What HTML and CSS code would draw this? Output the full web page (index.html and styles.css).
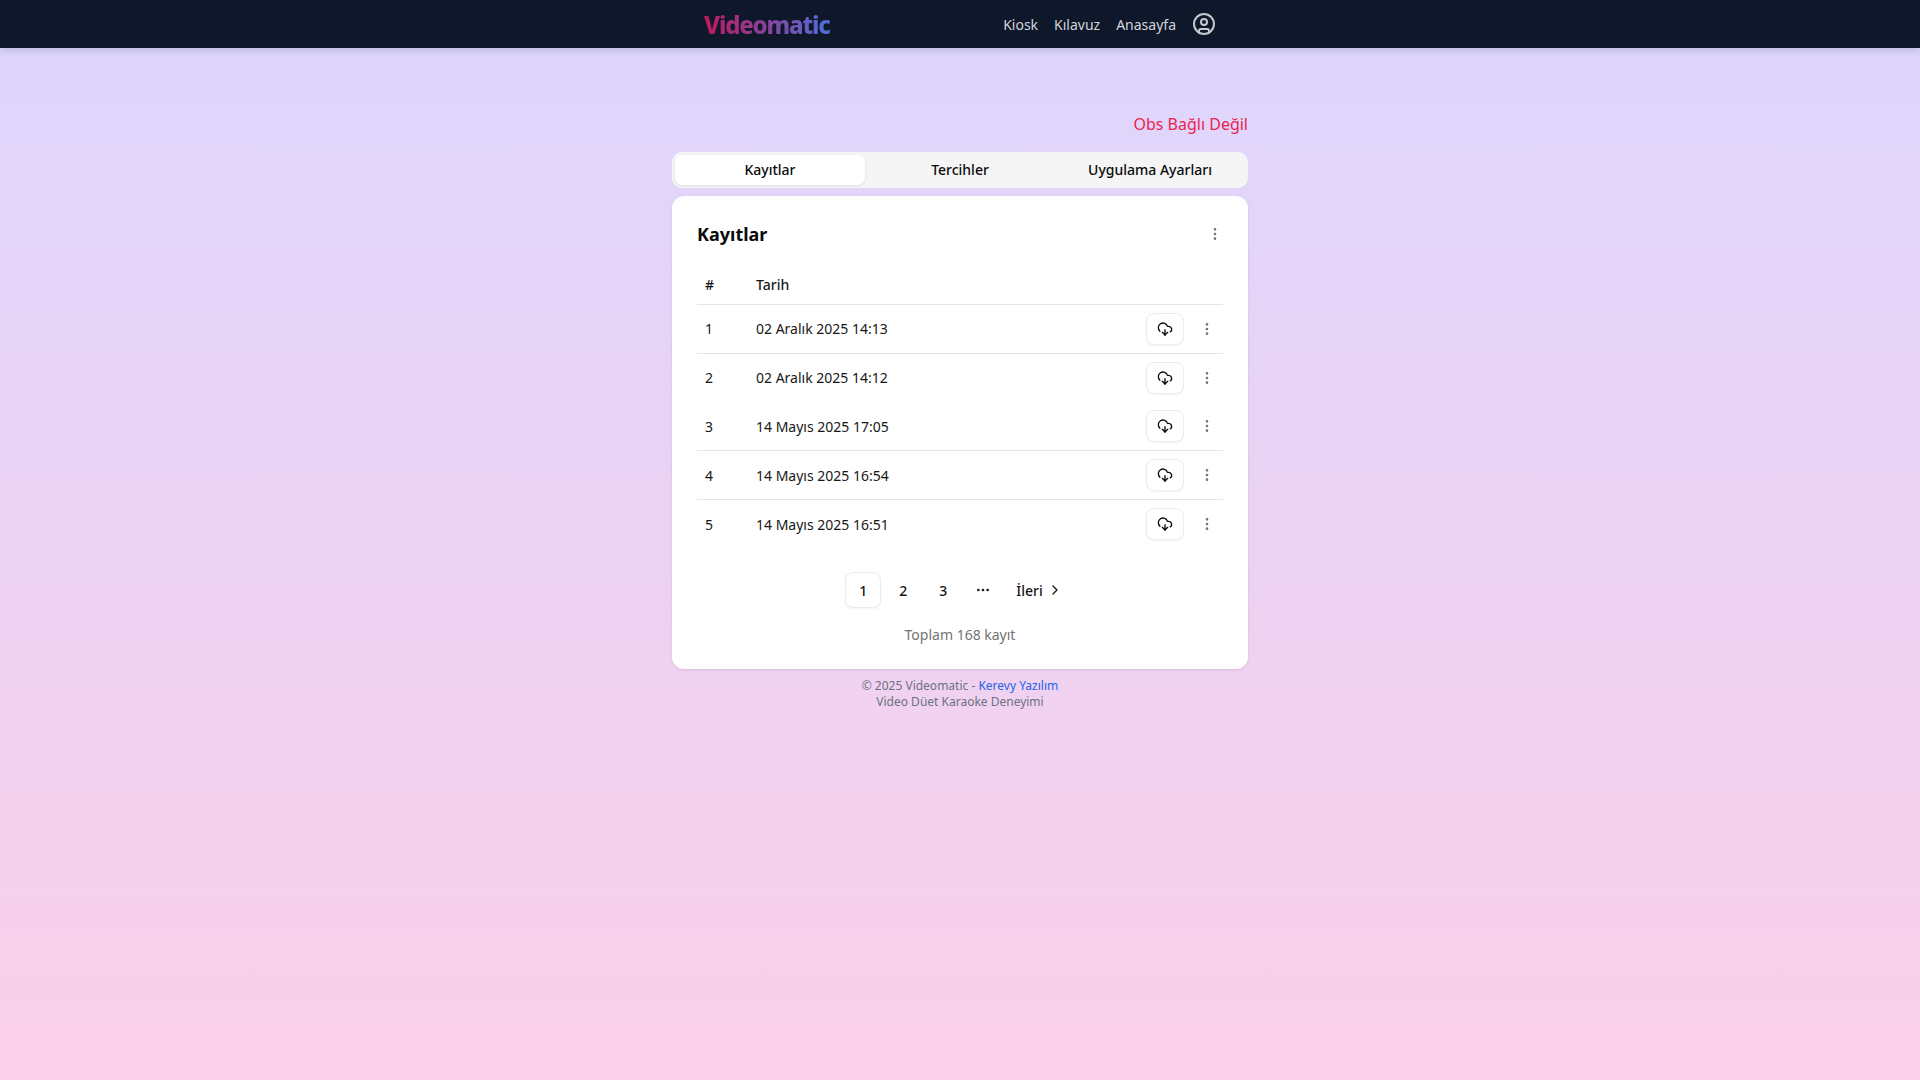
FILE: index.html
```html
<!DOCTYPE html>
<html lang="tr">
<head>
    <meta charset="UTF-8">
    <title>Videomatic</title>
    <link rel="stylesheet" href="styles.css">
</head>
<body>
    <header class="topbar">
        <div class="topbar-inner">
            <span class="logo">Videomatic</span>
            <nav class="nav">
                <a class="nav-link">Kiosk</a>
                <a class="nav-link">Kılavuz</a>
                <a class="nav-link">Anasayfa</a>
                <svg class="user-icon" viewBox="0 0 24 24" fill="none" stroke="currentColor" stroke-width="2" stroke-linecap="round" stroke-linejoin="round">
                    <circle cx="12" cy="12" r="10"/>
                    <circle cx="12" cy="10" r="3"/>
                    <path d="M7 20.662V19a2 2 0 0 1 2-2h6a2 2 0 0 1 2 2v1.662"/>
                </svg>
            </nav>
        </div>
    </header>

    <main class="main">
        <div class="status">Obs Bağlı Değil</div>
        <div class="tabs">
            <button class="tab active">Kayıtlar</button>
            <button class="tab">Tercihler</button>
            <button class="tab">Uygulama Ayarları</button>
        </div>

        <section class="card">
            <div class="card-head">
                <h2>Kayıtlar</h2>
                <svg class="dots" viewBox="0 0 24 24" fill="none" stroke="currentColor" stroke-width="2"><circle cx="12" cy="5" r="1"/><circle cx="12" cy="12" r="1"/><circle cx="12" cy="19" r="1"/></svg>
            </div>
            <div class="table-head">
                <span class="col-num">#</span>
                <span>Tarih</span>
            </div>
            <div id="rows"></div>

            <div class="pager">
                <span class="page current">1</span>
                <span class="page">2</span>
                <span class="page">3</span>
                <span class="page">
                    <svg class="more" viewBox="0 0 24 24" fill="none" stroke="currentColor" stroke-width="2"><circle cx="12" cy="12" r="1"/><circle cx="19" cy="12" r="1"/><circle cx="5" cy="12" r="1"/></svg>
                </span>
                <span class="next">İleri
                    <svg class="chevron" viewBox="0 0 24 24" fill="none" stroke="currentColor" stroke-width="2" stroke-linecap="round" stroke-linejoin="round"><path d="m9 18 6-6-6-6"/></svg>
                </span>
            </div>
            <p class="total">Toplam 168 kayıt</p>
        </section>

        <footer class="footer">
            <div>© 2025 Videomatic - <a class="footer-link">Kerevy Yazılım</a></div>
            <div>Video Düet Karaoke Deneyimi</div>
        </footer>
    </main>

    <script>
        const records = [
            { date: "02 Aralık 2025 14:13", line: true },
            { date: "02 Aralık 2025 14:12", line: false },
            { date: "14 Mayıs 2025 17:05", line: true },
            { date: "14 Mayıs 2025 16:54", line: true },
            { date: "14 Mayıs 2025 16:51", line: false }
        ];

        const rows = document.getElementById("rows");
        records.forEach((rec, index) => {
            let row = document.createElement("div");
            row.className = rec.line ? "row line" : "row";
            row.innerHTML = `
                <span class="col-num">${index + 1}</span>
                <span class="col-date">${rec.date}</span>
                <button class="download">
                    <svg viewBox="0 0 24 24" fill="none" stroke="currentColor" stroke-width="2" stroke-linecap="round" stroke-linejoin="round"><path d="M12 13v8l-4-4"/><path d="m12 21 4-4"/><path d="M4.393 15.269A7 7 0 1 1 15.71 8h1.79a4.5 4.5 0 0 1 2.436 8.284"/></svg>
                </button>
                <svg class="dots" viewBox="0 0 24 24" fill="none" stroke="currentColor" stroke-width="2"><circle cx="12" cy="5" r="1"/><circle cx="12" cy="12" r="1"/><circle cx="12" cy="19" r="1"/></svg>`;
            rows.appendChild(row);
        });
    </script>
</body>
</html>
```

FILE: styles.css
```css
* {
    box-sizing: border-box;
}
body {
    margin: 0;
    min-height: 1080px;
    font-family: "Noto Sans", sans-serif;
    font-size: 14px;
    color: #171717;
    background: linear-gradient(to bottom, #ddd6fe, #fbcfe8);
}
.topbar {
    height: 48px;
    background: #0f172a;
    box-shadow: 0 4px 6px rgba(0, 0, 0, 0.1);
}
.topbar-inner {
    width: 576px;
    height: 48px;
    margin: 0 auto;
    padding-left: 32px;
    padding-right: 32px;
    display: flex;
    align-items: center;
    justify-content: space-between;
}
.logo {
    font-size: 24px;
    font-weight: 800;
    letter-spacing: -1.2px;
    background: linear-gradient(to right, #be185d, #4f6fd8);
    -webkit-background-clip: text;
    background-clip: text;
    color: transparent;
}
.nav {
    display: flex;
    align-items: center;
    gap: 16px;
    color: #d1d5db;
}
.user-icon {
    width: 24px;
    height: 24px;
    color: #c4c8d0;
}
.main {
    width: 576px;
    margin: 0 auto;
    padding-top: 64px;
}
.status {
    font-size: 16px;
    line-height: 24px;
    text-align: right;
    color: #ec1f4e;
    margin-bottom: 16px;
}
.tabs {
    height: 36px;
    display: grid;
    grid-template-columns: 1fr 1fr 1fr;
    padding: 3px;
    background: #f5f5f5;
    border-radius: 10px;
    margin-bottom: 8px;
}
.tab {
    border: none;
    background: none;
    padding: 0 0 1px;
    font-family: inherit;
    font-size: 14px;
    font-weight: 500;
    color: #0a0a0a;
    border-radius: 8px;
}
.tab.active {
    background: #fff;
    box-shadow: 0 1px 3px rgba(0, 0, 0, 0.1);
}
.card {
    background: #fff;
    border-radius: 12px;
    padding: 24px 25px;
    box-shadow: 0 1px 3px rgba(0, 0, 0, 0.1);
}
.card-head {
    display: flex;
    align-items: center;
    justify-content: space-between;
    height: 28px;
    margin-bottom: 17px;
}
h2 {
    margin: 0;
    font-size: 18px;
    font-weight: 700;
    color: #0a0a0a;
}
.dots {
    width: 16px;
    height: 16px;
    color: #737373;
}
.table-head {
    display: flex;
    align-items: center;
    height: 40px;
    font-weight: 500;
    border-bottom: 1px solid #e5e5e5;
}
.col-num {
    width: 59px;
    padding-left: 8px;
}
.row {
    display: flex;
    align-items: center;
    height: 48.8px;
    padding-right: 8px;
    border-bottom: 1px solid transparent;
}
.row.line {
    border-bottom-color: #e5e5e5;
}
.col-date {
    flex: 1;
}
.download {
    width: 38px;
    height: 32px;
    display: flex;
    align-items: center;
    justify-content: center;
    padding: 0;
    background: #fff;
    border: 1px solid #ececec;
    border-radius: 8px;
    box-shadow: 0 1px 2px rgba(0, 0, 0, 0.05);
    color: #0a0a0a;
    margin-right: 15px;
}
.download svg {
    width: 16px;
    height: 16px;
}
.pager {
    display: flex;
    align-items: center;
    justify-content: center;
    gap: 4px;
    margin-top: 23.1px;
    font-weight: 500;
}
.page {
    width: 36px;
    height: 36px;
    display: flex;
    align-items: center;
    justify-content: center;
    border-radius: 8px;
}
.page.current {
    background: #fff;
    border: 1px solid #ececec;
    box-shadow: 0 1px 2px rgba(0, 0, 0, 0.05);
}
.more {
    width: 16px;
    height: 16px;
}
.next {
    display: flex;
    align-items: center;
    gap: 4px;
    height: 36px;
    padding: 0 12px 0 11px;
}
.chevron {
    width: 16px;
    height: 16px;
}
.total {
    margin: 17px 0 0;
    text-align: center;
    line-height: 20px;
    color: #737373;
}
.footer {
    margin-top: 9px;
    text-align: center;
    font-size: 12px;
    line-height: 16px;
    color: #6b7280;
}
.footer-link {
    color: #2563eb;
}
```
